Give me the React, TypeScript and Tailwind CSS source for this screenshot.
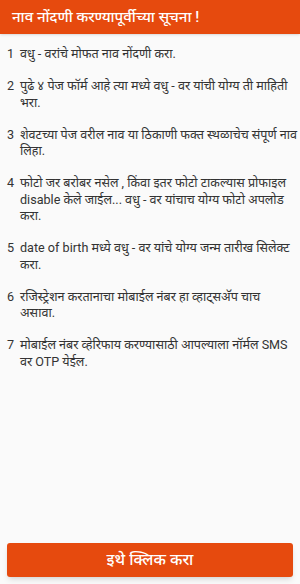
// item 6 breaks before "असावा." on the device, so the line break is kept in the text
const notes: string[] = [
  'वधु - वरांचे मोफत नाव नोंदणी करा.',
  'पुढे ४ पेज फॉर्म आहे त्या मध्ये वधु - वर यांची योग्य ती माहिती भरा.',
  'शेवटच्या पेज वरील नाव या ठिकाणी फक्त स्थळाचेच संपूर्ण नाव लिहा.',
  'फोटो जर बरोबर नसेल , किंवा इतर फोटो टाकल्यास प्रोफाइल disable केले जाईल... वधु - वर यांचाच योग्य फोटो अपलोड करा.',
  'date of birth मध्ये वधु - वर यांचे योग्य जन्म तारीख सिलेक्ट करा.',
  'रजिस्ट्रेशन करतानाचा मोबाईल नंबर हा व्हाट्सअ‍ॅप चाच\nअसावा.',
  'मोबाईल नंबर व्हेरिफाय करण्यासाठी आपल्याला नॉर्मल SMS वर OTP येईल.',
];

const font = "font-['Roboto','Noto_Sans_Devanagari_UI','Noto_Sans_Devanagari',sans-serif]";

export default function App() {
  return (
    <div className={`flex h-[584px] w-[300px] flex-col bg-[#fafafa] ${font}`}>
      <header className="flex h-[34px] shrink-0 items-center bg-[#e64a0e] px-3 shadow-sm">
        <h1 className="text-[15px] font-medium text-white">नाव नोंदणी करण्यापूर्वीच्या सूचना !</h1>
      </header>

      <ol className="mt-[12px] flex flex-col gap-[15.5px] pr-[1px] pl-[7px]">
        {notes.map((n, i) => (
          <li key={i} className="flex text-[12.6px] leading-[16.5px] text-[#333333]">
            <span className="w-[13px] shrink-0">{i + 1}</span>
            <span className="whitespace-pre-line">{n}</span>
          </li>
        ))}
      </ol>

      <div className="mt-auto px-[7px] pb-[7px]">
        <button
          type="button"
          className="flex h-[34px] w-full items-center justify-center rounded-[3px] bg-[#e64a0e] text-[16px] font-medium text-white shadow-md"
        >
          इथे क्लिक करा
        </button>
      </div>
    </div>
  );
}
